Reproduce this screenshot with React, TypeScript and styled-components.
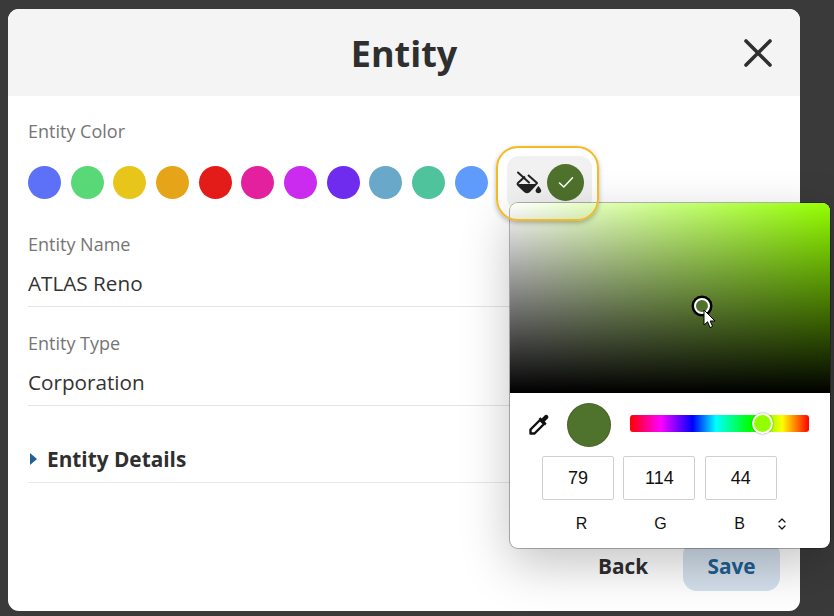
import React from "react";
import styled, { createGlobalStyle } from "styled-components";

const GlobalStyle = createGlobalStyle`
    html, body {
        margin: 0;
        height: 616px;
        overflow: hidden;
        background: #3a3a3b;
        font-family: "Open Sans", sans-serif;
    }
`;

const swatches = [
    "#5c70f8", "#58d877", "#e8c51a", "#e6a518", "#e31c19", "#e3219e",
    "#cb2aef", "#6f2cef", "#69a8c8", "#4fc39c", "#5f9bfa",
];

const rgb = [
    { label: "R", value: "79" },
    { label: "G", value: "114" },
    { label: "B", value: "44" },
];

const Field: React.FC<{ label: string; value: string }> = ({ label, value }) => (
    <FieldRow>
        <FieldLabel>{label}</FieldLabel>
        <FieldValue>{value}</FieldValue>
    </FieldRow>
);

export default function App() {
    return (
        <>
            <GlobalStyle />
            <Page>
                <Dialog>
                    <Header>
                        <Title>Entity</Title>
                        <CloseButton>
                            <svg width="30" height="30" viewBox="0 0 30 30" fill="none" stroke="#2f2f2f" strokeWidth="3.6" strokeLinecap="round">
                                <path d="M3 3 L27 27 M27 3 L3 27" />
                            </svg>
                        </CloseButton>
                    </Header>
                    <Body>
                        <FieldLabel>Entity Color</FieldLabel>
                        <SwatchRow>
                            {swatches.map((c) => (
                                <Swatch key={c} $color={c} />
                            ))}
                            <CustomSwatch>
                                <svg width="26" height="24" viewBox="0 0 26 24">
                                    <path d="M12 4 L21 12 L13 20.5 Q11 22 9 20.5 L2.2 14 Q1 13 2.2 11.8 L9 5.5" fill="#f1f1f1" stroke="#222" strokeWidth="2" strokeLinejoin="round" />
                                    <path d="M2.5 13 H20 L13 20.5 Q11 21.8 9 20.5 Z" fill="#222" />
                                    <path d="M2 1.5 L13 11.5" stroke="#222" strokeWidth="2" strokeLinecap="round" fill="none" />
                                    <path d="M22.4 15 Q25.6 18.8 25.2 20.2 A2.9 2.9 0 0 1 19.6 20.2 Q19.2 18.8 22.4 15 Z" fill="#222" />
                                </svg>
                                <PickedColor>
                                    <svg width="16" height="13" viewBox="0 0 16 13" fill="none" stroke="#fff" strokeWidth="1.5" strokeLinecap="round" strokeLinejoin="round">
                                        <path d="M1.5 7 L5.8 11 L14.5 1.8" />
                                    </svg>
                                </PickedColor>
                                <FocusRing />
                            </CustomSwatch>
                        </SwatchRow>
                        <Field label="Entity Name" value="ATLAS Reno" />
                        <Field label="Entity Type" value="Corporation" />
                        <Details>
                            <Caret />
                            Entity Details
                        </Details>
                    </Body>
                    <Footer>
                        <BackButton>Back</BackButton>
                        <SaveButton>Save</SaveButton>
                    </Footer>
                    <Picker>
                        <Saturation>
                            <Marker />
                            <Pointer width="14" height="20" viewBox="0 0 14 20">
                                <path d="M1 1 V16 L4.6 12.8 L7 18.6 L9.6 17.4 L7.2 12 H12 Z" fill="#fff" stroke="#000" strokeWidth="1" />
                            </Pointer>
                        </Saturation>
                        <Controls>
                            <ToolRow>
                                <svg width="24" height="24" viewBox="0 0 24 24">
                                    <path d="M13 7 L3.5 16.5 V20.5 H7.5 L17 11 Z" stroke="#111" strokeWidth="2.4" fill="#fff" strokeLinejoin="round" />
                                    <path d="M11.6 6 L18 12.4 L19.6 10.6 L17.8 8.6 L20.8 5.6 Q22.2 3.6 20.8 2.4 Q19 1.2 17.6 2.6 L14.8 5.6 L13.4 4.2 Z" fill="#111" />
                                </svg>
                                <Preview />
                                <HueTrack>
                                    <HueThumb />
                                </HueTrack>
                            </ToolRow>
                            <InputRow>
                                {rgb.map((c) => (
                                    <ChannelBox key={c.label}>{c.value}</ChannelBox>
                                ))}
                            </InputRow>
                            <LabelRow>
                                {rgb.map((c) => (
                                    <ChannelLabel key={c.label}>{c.label}</ChannelLabel>
                                ))}
                                <ModeToggle width="8" height="12" viewBox="0 0 8 12" fill="none" stroke="#111" strokeWidth="1.2" strokeLinecap="round" strokeLinejoin="round">
                                    <path d="M1 4 L4 1 L7 4 M1 8 L4 11 L7 8" />
                                </ModeToggle>
                            </LabelRow>
                        </Controls>
                    </Picker>
                </Dialog>
            </Page>
        </>
    );
}

const Page = styled.div`
    padding: 9px 34px 5px 8px;
    width: 792px;
    height: 602px;
`;

const Dialog = styled.div`
    position: relative;
    width: 792px;
    height: 602px;
    background: #ffffff;
    border-radius: 11px;
    display: flex;
    flex-direction: column;
`;

const Header = styled.div`
    height: 87px;
    flex-shrink: 0;
    background: #f4f4f4;
    border-radius: 11px 11px 0 0;
    display: flex;
    align-items: center;
    justify-content: center;
    position: relative;
`;

const Title = styled.h1`
    margin: 2px 0 0;
    font-size: 36px;
    line-height: 48px;
    font-weight: 700;
    color: #2f2f2f;
`;

const CloseButton = styled.div`
    position: absolute;
    top: 29px;
    right: 27px;
    width: 30px;
    height: 30px;
    svg {
        display: block;
    }
`;

const Body = styled.div`
    padding: 23px 20px 0;
    flex: 1;
`;

const FieldLabel = styled.div`
    font-size: 18px;
    line-height: 24px;
    color: #757575;
`;

const SwatchRow = styled.div`
    display: flex;
    align-items: center;
    gap: 9.67px;
    margin: 23px 0 33px;
    height: 33px;
`;

const Swatch = styled.div<{ $color: string }>`
    width: 33px;
    height: 33px;
    border-radius: 50%;
    flex-shrink: 0;
    background: ${(p) => p.$color};
`;

const CustomSwatch = styled.div`
    position: relative;
    display: flex;
    align-items: center;
    gap: 5px;
    width: 85px;
    height: 54px;
    margin-left: 10px;
    padding-left: 9px;
    box-sizing: border-box;
    background: #f1f1f1;
    border-radius: 12px;
    flex-shrink: 0;
    svg {
        flex-shrink: 0;
    }
`;

const FocusRing = styled.div`
    position: absolute;
    z-index: 2;
    left: -11px;
    top: -10px;
    width: 103px;
    height: 75px;
    box-sizing: border-box;
    border: 2.5px solid #f5b922;
    border-radius: 22px;
    box-shadow: 0 2px 5px rgba(0, 0, 0, 0.28);
`;

const PickedColor = styled.div`
    width: 37px;
    height: 37px;
    border-radius: 50%;
    background: #4f722c;
    display: flex;
    align-items: center;
    justify-content: center;
`;

const FieldRow = styled.div`
    width: 752px;
    border-bottom: 1px solid #e4e4e4;
    margin-top: 24px;
    padding-bottom: 8px;
`;

const FieldValue = styled.div`
    margin-top: 12px;
    font-size: 20.7px;
    line-height: 30px;
    color: #333333;
`;

const Details = styled.div`
    width: 752px;
    padding: 38px 0 8px;
    display: flex;
    align-items: center;
    gap: 10px;
    font-size: 20.8px;
    line-height: 30px;
    font-weight: 700;
    color: #2f2f2f;
    border-bottom: 1px solid #e8e8e8;
`;

const Caret = styled.span`
    width: 0;
    height: 0;
    margin-left: 2px;
    border-left: 7px solid #1f6096;
    border-top: 6px solid transparent;
    border-bottom: 6px solid transparent;
`;

const Footer = styled.div`
    display: flex;
    justify-content: flex-end;
    align-items: center;
    padding: 0 20px 20px 0;
`;

const BackButton = styled.div`
    width: 120px;
    text-align: center;
    font-size: 20.8px;
    font-weight: 700;
    color: #2f2f2f;
`;

const SaveButton = styled.div`
    width: 97px;
    height: 50px;
    border-radius: 14px;
    background: #d4e0ec;
    color: #1f5f90;
    font-size: 20.8px;
    font-weight: 700;
    display: flex;
    align-items: center;
    justify-content: center;
`;

const Picker = styled.div`
    position: absolute;
    z-index: 1;
    left: 502px;
    top: 194px;
    width: 320px;
    height: 345px;
    background: #ffffff;
    border-radius: 8px;
    overflow: hidden;
    box-shadow: 0 0 0 1px rgba(0, 0, 0, 0.28), 0 16px 50px rgba(0, 0, 0, 0.24);
    font-family: "Liberation Sans", Arial, sans-serif;
`;

const Saturation = styled.div`
    position: relative;
    height: 190px;
    background:
        linear-gradient(to bottom, rgba(0, 0, 0, 0), #000),
        linear-gradient(to right, #fff, rgba(255, 255, 255, 0)),
        #94ff00;
`;

const Marker = styled.div`
    position: absolute;
    left: 184px;
    top: 95px;
    width: 12px;
    height: 12px;
    border-radius: 50%;
    background: #4f722c;
    border: 2px solid #ffffff;
    box-shadow: 0 0 0 2.5px #000;
`;

const Pointer = styled.svg`
    position: absolute;
    left: 193px;
    top: 106px;
`;

const Controls = styled.div`
    padding: 10px 0 0;
`;

const ToolRow = styled.div`
    display: flex;
    align-items: center;
    height: 44px;
    padding-left: 17px;
    svg {
        flex-shrink: 0;
    }
`;

const Preview = styled.div`
    width: 44px;
    height: 44px;
    margin-left: 16px;
    border-radius: 50%;
    background: #4f722c;
    box-shadow: inset 0 0 0 1px rgba(0, 0, 0, 0.12);
    flex-shrink: 0;
`;

const HueTrack = styled.div`
    position: relative;
    width: 179px;
    height: 17px;
    margin-left: 19px;
    margin-top: -4px;
    border-radius: 3px;
    background: linear-gradient(to right, #f00 0%, #f0f 17%, #00f 35%, #0ff 48%, #0f0 67%, #ff0 85%, #f00 100%);
`;

const HueThumb = styled.div`
    position: absolute;
    left: 122px;
    top: -2px;
    width: 17px;
    height: 17px;
    border-radius: 50%;
    background: #94ff00;
    border: 2px solid #ffffff;
    box-shadow: 0 0 2px rgba(0, 0, 0, 0.5);
`;

const InputRow = styled.div`
    display: flex;
    gap: 9.4px;
    margin-top: 9px;
    padding-left: 32px;
`;

const ChannelBox = styled.div`
    width: 72px;
    height: 44px;
    box-sizing: border-box;
    border: 1px solid #d0d0d0;
    border-radius: 2px;
    display: flex;
    align-items: center;
    justify-content: center;
    font-size: 18px;
    color: #111111;
`;

const LabelRow = styled.div`
    display: flex;
    align-items: center;
    height: 20px;
    margin-top: 14px;
    padding-left: 32px;
`;

const ChannelLabel = styled.div`
    width: 79px;
    text-align: center;
    font-size: 16px;
    color: #111111;
`;

const ModeToggle = styled.svg`
    margin-left: -1px;
`;
